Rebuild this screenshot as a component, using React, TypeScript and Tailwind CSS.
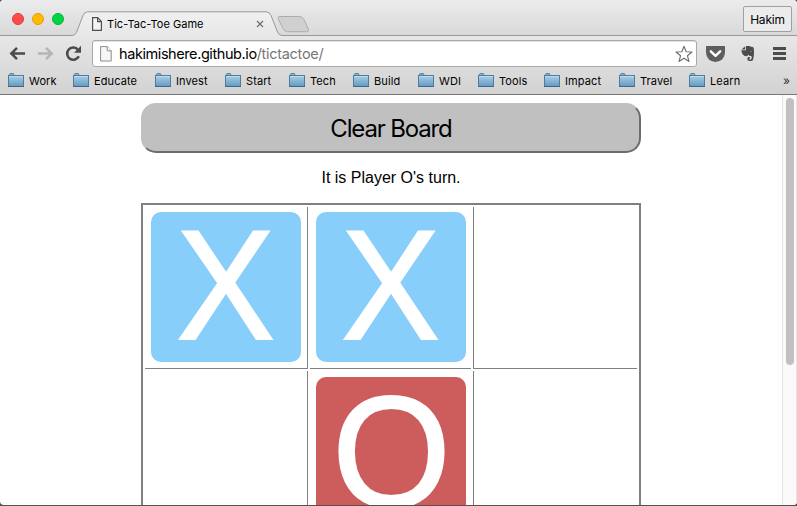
import React from "react";

const bookmarks = [
  { label: "Work", width: "w-[65px]" },
  { label: "Educate", width: "w-[82px]" },
  { label: "Invest", width: "w-[70px]" },
  { label: "Start", width: "w-[64px]" },
  { label: "Tech", width: "w-[64px]" },
  { label: "Build", width: "w-[65px]" },
  { label: "WDI", width: "w-[60px]" },
  { label: "Tools", width: "w-[66px]" },
  { label: "Impact", width: "w-[75px]" },
  { label: "Travel", width: "w-[70px]" },
  { label: "Learn", width: "w-[60px]" },
];

function Folder() {
  return (
    <svg width="16" height="15" viewBox="0 0 16 15" className="shrink-0">
      <defs>
        <linearGradient id="folder" x1="0" y1="0" x2="0" y2="1">
          <stop offset="0" stopColor="#acd0e8" />
          <stop offset="1" stopColor="#6399c2" />
        </linearGradient>
      </defs>
      <path d="M1.5 3V1.5Q1.5 .6 2.4 .6H5Q5.8 .6 5.8 1.5V2.5H14.5" fill="#8ab4d2" stroke="#4f7e9f" />
      <rect x=".5" y="2.5" width="15" height="11" fill="url(#folder)" stroke="#4e7c9d" />
      <path d="M1 3.5H15" stroke="#bcdcef" />
      <path d="M0 13.5H16" stroke="#3e6788" />
    </svg>
  );
}

function PageIcon({ light = false }: { light?: boolean }) {
  return light ? (
    <svg width="12" height="16" viewBox="0 0 12 16" className="shrink-0">
      <path d="M.6 .6H7.2L11.2 4.8V15H.6Z" fill="#f7f7f7" stroke="#8c8c8c" />
      <path d="M7.2 .6V4.8H11.2" fill="#fff" stroke="#8c8c8c" />
    </svg>
  ) : (
    <svg width="10" height="14" viewBox="0 0 10 14" className="shrink-0">
      <path d="M.6 .6H5.6L9.4 4.6V13.4H.6Z" fill="#f4f4f4" stroke="#505050" strokeWidth="1.2" />
      <path d="M5.6 .6V4.6H9.4" fill="none" stroke="#505050" strokeWidth="1.2" />
    </svg>
  );
}

function TabStrip() {
  return (
    <div className="relative h-9 w-full bg-linear-to-b from-[#ececec] to-[#d8d8d8]">
      <svg width="797" height="36" viewBox="0 0 797 36" className="absolute inset-0">
        <defs>
          <linearGradient id="tab" x1="0" y1="0" x2="0" y2="1">
            <stop offset="0" stopColor="#f0f0f0" />
            <stop offset="1" stopColor="#e7e7e7" />
          </linearGradient>
        </defs>
        <path d="M0 35.5H72Q75 35.5 76.5 32.5L83 15.5Q84.3 11.8 87.5 11.8H266Q269.5 11.8 271 15.5L277.5 32Q279 35.5 282 35.5H797V37H0Z" fill="url(#tab)" stroke="#999" />
        <path d="M280 16.5H299Q302.5 16.5 304 19.5L308.3 29Q309.3 31.7 306.5 31.7H287.5Q284.3 31.7 283 28.5L278 18.5Q277.4 16.5 280 16.5Z" fill="#d0d0d0" stroke="#adadad" />
      </svg>
      <div className="relative flex h-9 items-start">
        <div className="flex gap-2 pt-[13px] pl-3">
          <i className="size-3 rounded-full border border-[#e0393b] bg-[#ff4a4b]" />
          <i className="size-3 rounded-full border border-[#e6a000] bg-[#ffb900]" />
          <i className="size-3 rounded-full border border-[#00b833] bg-[#00d441]" />
        </div>
        <div className="mt-3 ml-7 flex h-6 w-[172px] items-center">
          <PageIcon />
          <span className="ml-[5px] text-[11px] tracking-[0.03px] whitespace-nowrap">Tic-Tac-Toe Game</span>
          <svg width="8" height="8" viewBox="0 0 8 8" className="ml-auto">
            <path d="M1 1L7 7M7 1L1 7" stroke="#707070" strokeWidth="1.3" />
          </svg>
        </div>
        <div className="mt-1.5 mr-[5px] ml-auto flex h-[26px] w-[49px] items-center justify-center rounded-[2px] border border-[#a0a0a0] bg-[#ebebeb] pt-px text-[12px] tracking-[-0.2px]">Hakim</div>
      </div>
    </div>
  );
}

function Toolbar() {
  return (
    <div className="flex h-[34px] items-start pt-1">
      <svg width="92" height="28" viewBox="0 0 92 28" className="shrink-0">
        <path d="M25 13.5H11.5M17 7.8L11.3 13.5L17 19.2" fill="none" stroke="#4b4b4b" strokeWidth="2.5" />
        <path d="M38 13.5H51.5M46 7.8L51.7 13.5L46 19.2" fill="none" stroke="#b5b5b5" strokeWidth="2.5" />
        <path d="M78.8 16.2A6.1 6.1 0 1 1 77.6 9.3" fill="none" stroke="#4b4b4b" strokeWidth="2.6" />
        <path d="M81 5.8V12.8H74Z" fill="#4b4b4b" />
      </svg>
      <div className="flex h-[27px] w-[605px] items-center rounded-[3px] border border-[#a9a9a9] bg-white pl-[7px] shadow-[inset_0_1px_0_#e4e4e4]">
        <PageIcon light />
        <span className="ml-[7px] text-[14.5px] tracking-[-0.42px] whitespace-nowrap">
          hakimishere.github.io<span className="tracking-[-0.3px] text-[#777]">/tictactoe/</span>
        </span>
        <svg width="18" height="18" viewBox="0 0 18 18" className="mr-[3px] ml-auto">
          <path d="M9 1.2L11.1 6.7L17 7L12.4 10.7L14 16.5L9 13.2L4 16.5L5.6 10.7L1 7L6.9 6.7Z" fill="#fff" stroke="#6e6e6e" strokeWidth="1.1" strokeLinejoin="round" />
        </svg>
      </div>
      <svg width="100" height="28" viewBox="697 40 100 28" className="shrink-0">
        <path d="M706 46H725V52.5A9.5 9.5 0 0 1 706 52.5Z" fill="#5e5e5e" />
        <path d="M710.8 51.3L715.5 55.8L720.2 51.3" fill="none" stroke="#fff" strokeWidth="2.4" strokeLinecap="round" strokeLinejoin="round" />
        <path d="M745.2 46.2V49.5H741.5Z" fill="#4c4c4c" />
        <path d="M746 46H749.5Q750.6 46.9 753 47Q754 47.7 754 51Q754 61 751.5 61H749Q747.2 60.5 747.3 58.5Q747.6 56.8 750 57.2V58.4Q748.8 58.4 749 59.5H751Q752 58.5 751.6 56.3L749.3 55.7L748.3 54.5Q747.8 56.4 746 56.2Q742.2 56 741.3 50.3H746Z" fill="#4c4c4c" />
        <path d="M750 51.6Q751.4 50.8 752.2 52Z" fill="#ddd" />
        <path d="M773 48.5H786M773 53.5H786M773 58.5H786" stroke="#4c4c4c" strokeWidth="2.8" />
      </svg>
    </div>
  );
}

function Bookmarks() {
  return (
    <div className="flex h-[25px] items-center border-b border-[#777] pb-[3px] pl-2 text-[11px]">
      {bookmarks.map((b) => (
        <div key={b.label} className={`flex shrink-0 items-center ${b.width}`}>
          <Folder />
          <span className="ml-[5px] pt-px tracking-[0.1px]">{b.label}</span>
        </div>
      ))}
      <span className="mr-[7px] ml-auto text-[12px] leading-none text-[#333]">»</span>
    </div>
  );
}

function Tile({ mark }: { mark: "X" | "O" }) {
  return (
    <div className={`flex size-[150px] items-center justify-center rounded-[10px] font-['Liberation_Sans',sans-serif] leading-[150px] text-white ${mark === "X" ? "bg-[#87cefa] pb-[3px] text-[155px]" : "bg-[#cd5c5c] pb-[3px] text-[158px]"}`}>
      <span className={`[-webkit-text-stroke:2px_white] ${mark === "X" ? "scale-x-[0.95]" : "scale-x-[0.965]"}`}>{mark}</span>
    </div>
  );
}

export default function App() {
  return (
    <div className="flex h-[506px] w-[797px] flex-col overflow-hidden bg-[#555250] font-['Inter',sans-serif] text-black">
      <div className="flex h-[505px] flex-col overflow-hidden rounded-t-[4px] rounded-b-[4px] bg-white">
        <TabStrip />
        <div className="bg-linear-to-b from-[#e7e7e7] to-[#d2d2d2]">
          <Toolbar />
          <Bookmarks />
        </div>
        <div className="flex h-[410px] overflow-hidden">
          <div className="flex w-[782px] flex-col items-center overflow-hidden pt-2">
            <button className="h-[50px] w-[500px] shrink-0 rounded-[15px] border-2 border-[#c0c0c0] border-r-[#6c6c6c] border-b-[#6c6c6c] bg-[#c0c0c0] pt-[2px] text-[24px] tracking-[-1.15px]">
              Clear Board
            </button>
            <p className="mt-4 h-[34px] shrink-0 font-['Liberation_Sans',sans-serif] text-[16px] leading-[18px]">It is Player O's turn.</p>
            <div className="grid h-[500px] w-[500px] shrink-0 grid-cols-[163px_161px_164px] grid-rows-[162px_162px_164px] gap-[2px] border-2 border-[#808080] p-[2px]">
              <div className="border-r border-b border-[#808080] pt-[5px] pl-[6px]"><Tile mark="X" /></div>
              <div className="border-b border-[#808080] pt-[5px] pl-[6px]"><Tile mark="X" /></div>
              <div className="border-b border-l border-[#808080]" />
              <div className="border-r border-b border-[#808080]" />
              <div className="border-b border-[#808080] pt-[6px] pl-[6px]"><Tile mark="O" /></div>
              <div className="border-b border-l border-[#808080]" />
            </div>
          </div>
          <div className="w-[15px] border-r border-l border-[#e4e4e4] bg-[#fafafa] pt-[3px] pl-[3px]">
            <div className="h-[267px] w-2 rounded-full bg-[#c1c1c1]" />
          </div>
        </div>
      </div>
    </div>
  );
}
